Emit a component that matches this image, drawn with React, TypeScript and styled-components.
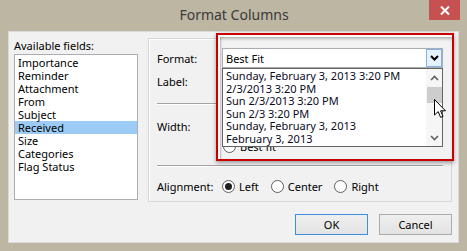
import * as React from "react";
import styled, { createGlobalStyle } from "styled-components";

const GlobalStyle = createGlobalStyle`
  html, body {
    margin: 0;
    padding: 0;
  }
  body {
    width: 467px;
    height: 251px;
    overflow: hidden;
    font-family: "Noto Sans", "Open Sans", sans-serif;
    font-size: 11px;
    color: #000;
  }
`;

const Window = styled.div`
  position: relative;
  width: 467px;
  height: 251px;
  box-sizing: border-box;
  padding: 0 8px 8px 8px;
  background: #bdb6a2;
  display: flex;
  flex-direction: column;
`;

const TitleBar = styled.div`
  height: 31px;
  display: grid;
  grid-template-columns: 1fr auto 1fr;
  margin-right: -1px;
`;

const Title = styled.div`
  grid-column: 2;
  font-size: 14px;
  line-height: 30px;
  color: #3a3a3a;
`;

const CloseButton = styled.div`
  grid-column: 3;
  justify-self: end;
  width: 31px;
  height: 20px;
  background: #c75050;
  display: flex;
  align-items: center;
  justify-content: center;
`;

const Client = styled.div`
  height: 212px;
  box-sizing: border-box;
  border: 1px solid #dadada;
  background: #f1f1f1;
  padding: 6px 6px 0 5px;
  display: flex;
  flex-direction: column;
`;

const TopRow = styled.div`
  display: flex;
  gap: 10px;
`;

const FieldsPanel = styled.div`
  width: 124px;
  display: flex;
  flex-direction: column;
`;

const PanelLabel = styled.div`
  height: 16px;
  line-height: 15px;
`;

const FieldList = styled.div`
  height: 146px;
  box-sizing: border-box;
  border: 1px solid #abadb3;
  background: #fff;
  padding-top: 1px;
`;

const FieldItem = styled.div<{ $selected?: boolean }>`
  height: 13px;
  line-height: 13px;
  padding-left: 3px;
  background: ${(p) => (p.$selected ? "#9ccbf5" : "transparent")};
`;

const GroupBox = styled.div`
  width: 304px;
  height: 164px;
  box-sizing: border-box;
  border: 1px solid #d6d6d6;
  box-shadow: inset 1px 1px 0 #fff;
  padding: 8px 8px 0 8px;
  display: flex;
  flex-direction: column;
`;

const FieldRow = styled.div<{ $gap?: number }>`
  height: 23px;
  margin-top: ${(p) => p.$gap ?? 0}px;
  display: flex;
  align-items: center;
`;

const FieldLabel = styled.div`
  width: 65px;
`;

const Divider = styled.div<{ $gap: number }>`
  margin-top: ${(p) => p.$gap}px;
  border-top: 1px solid #a3a3a3;
  border-bottom: 1px solid #fff;
`;

const RadioGroup = styled.div`
  display: flex;
  align-items: center;
  gap: 12px;
`;

const RadioOption = styled.label`
  display: flex;
  align-items: center;
  gap: 4px;
`;

const RadioCircle = styled.span<{ $checked?: boolean }>`
  flex: none;
  width: 13px;
  height: 13px;
  box-sizing: border-box;
  border-radius: 50%;
  border: 1px solid #5e5e5e;
  background: #fff;
  display: flex;
  align-items: center;
  justify-content: center;

  &::after {
    content: "";
    width: 7px;
    height: 7px;
    border-radius: 50%;
    background: ${(p) => (p.$checked ? "#1f1f1f" : "transparent")};
  }
`;

const ButtonRow = styled.div`
  margin-top: 12px;
  display: flex;
  justify-content: flex-end;
  gap: 11px;
`;

const Button = styled.div<{ $focused?: boolean }>`
  width: 73px;
  height: 21px;
  box-sizing: border-box;
  border: 1px solid ${(p) => (p.$focused ? "#3c8fe0" : "#acacac")};
  background: linear-gradient(#efefef, #e3e3e3);
  display: flex;
  align-items: center;
  justify-content: center;
`;

/* the red callout that shows the open dropdown */
const Callout = styled.div`
  position: absolute;
  left: 216px;
  top: 33px;
  width: 238px;
  height: 128px;
  box-sizing: border-box;
  border: 2px solid #c80000;
  background: #fafafa;
  box-shadow: 0 2px 4px rgba(0, 0, 0, 0.35);
  display: flex;
`;

const CalloutPanel = styled.div`
  flex: 1;
  margin: 2px 0 0 2px;
  padding: 11px 9px 0 2px;
  background: #f2f2f2;
  box-shadow: inset 0 3px 3px -1px rgba(0, 0, 0, 0.25),
    inset 2px 0 2px -1px rgba(0, 0, 0, 0.2);
  display: flex;
  flex-direction: column;
  overflow: hidden;
`;

const Combo = styled.div`
  height: 20px;
  box-sizing: border-box;
  border: 1px solid #abadb3;
  background: #fff;
  display: flex;
  align-items: center;
  padding-left: 3px;
`;

const ComboArrow = styled.div`
  margin-left: auto;
  width: 16px;
  height: 18px;
  box-sizing: border-box;
  border: 1px solid #7eb4ea;
  background: #e5f1fb;
  display: flex;
  align-items: center;
  justify-content: center;
`;

const DropList = styled.div`
  height: 79px;
  box-sizing: border-box;
  border: 1px solid #646464;
  background: #fff;
  display: flex;
`;

const DropItems = styled.div`
  flex: 1;
  padding: 1px 0 0 3px;
  overflow: hidden;
`;

const DropItem = styled.div`
  line-height: 12.6px;
  white-space: nowrap;
  color: #0a0a1e;
`;

const ScrollBar = styled.div`
  width: 16px;
  background: #f6f6f6;
  display: flex;
  flex-direction: column;
`;

const ScrollArrow = styled.div`
  height: 17px;
  display: flex;
  align-items: center;
  justify-content: center;
`;

const ScrollThumb = styled.div`
  height: 16px;
  margin: 1px 0 0 1px;
  background: #cdcdcd;
`;

const ScrollTrack = styled.div`
  flex: 1;
`;

/* only the bottom sliver of the "Best fit" radio shows under the list */
const BestFitPeek = styled.div`
  height: 6px;
  overflow: hidden;
`;

const BestFitRow = styled.div`
  margin-top: -7px;
  padding-left: 1px;
  height: 13px;
  display: flex;
  align-items: center;
  gap: 4px;
`;

const Cursor = styled.svg`
  position: absolute;
  left: 216px;
  top: 64px;
`;

const Chevron = ({
  dir,
  color = "#000",
  w = 1.6,
}: {
  dir: "up" | "down";
  color?: string;
  w?: number;
}) => (
  <svg width="9" height="6" viewBox="0 0 9 6">
    <polyline
      points={dir === "down" ? "1,1 4.5,4.5 8,1" : "1,5 4.5,1.5 8,5"}
      fill="none"
      stroke={color}
      strokeWidth={w}
    />
  </svg>
);

const fields = [
  "Importance",
  "Reminder",
  "Attachment",
  "From",
  "Subject",
  "Received",
  "Size",
  "Categories",
  "Flag Status",
];

const formats = [
  "Sunday, February 3, 2013 3:20 PM",
  "2/3/2013 3:20 PM",
  "Sun 2/3/2013 3:20 PM",
  "Sun 2/3 3:20 PM",
  "Sunday, February 3, 2013",
  "February 3, 2013",
];

export default function App() {
  return (
    <Window>
      <GlobalStyle />
      <TitleBar>
        <Title>Format Columns</Title>
        <CloseButton>
          <svg width="10" height="9" viewBox="0 0 10 9">
            <path d="M1,0.5 L9,8.5 M9,0.5 L1,8.5" stroke="#fff" strokeWidth="2" />
          </svg>
        </CloseButton>
      </TitleBar>
      <Client>
        <TopRow>
          <FieldsPanel>
            <PanelLabel>Available fields:</PanelLabel>
            <FieldList>
              {fields.map((f) => (
                <FieldItem key={f} $selected={f === "Received"}>
                  {f}
                </FieldItem>
              ))}
            </FieldList>
          </FieldsPanel>
          <GroupBox>
            <FieldRow>
              <FieldLabel>Format:</FieldLabel>
            </FieldRow>
            <FieldRow>
              <FieldLabel>Label:</FieldLabel>
            </FieldRow>
            <Divider $gap={10} />
            <FieldRow $gap={10}>
              <FieldLabel>Width:</FieldLabel>
            </FieldRow>
            <Divider $gap={27} />
            <FieldRow $gap={8}>
              <FieldLabel>Alignment:</FieldLabel>
              <RadioGroup>
                <RadioOption>
                  <RadioCircle $checked />
                  Left
                </RadioOption>
                <RadioOption>
                  <RadioCircle />
                  Center
                </RadioOption>
                <RadioOption>
                  <RadioCircle />
                  Right
                </RadioOption>
              </RadioGroup>
            </FieldRow>
          </GroupBox>
        </TopRow>
        <ButtonRow>
          <Button $focused>OK</Button>
          <Button>Cancel</Button>
        </ButtonRow>
      </Client>

      <Callout>
        <CalloutPanel>
          <Combo>
            Best Fit
            <ComboArrow>
              <Chevron dir="down" w={2} />
            </ComboArrow>
          </Combo>
          <DropList>
            <DropItems>
              {formats.map((f) => (
                <DropItem key={f}>{f}</DropItem>
              ))}
            </DropItems>
            <ScrollBar>
              <ScrollArrow>
                <Chevron dir="up" color="#606060" />
              </ScrollArrow>
              <ScrollThumb />
              <ScrollTrack />
              <ScrollArrow>
                <Chevron dir="down" color="#606060" />
              </ScrollArrow>
            </ScrollBar>
          </DropList>
          <BestFitPeek>
            <BestFitRow>
              <RadioCircle />
              Best fit
            </BestFitRow>
          </BestFitPeek>
        </CalloutPanel>
        <Cursor width="13" height="20" viewBox="0 0 13 20">
          <path
            d="M0.5,0.5 L0.5,16 L4.2,12.6 L6.6,18.4 L9,17.4 L6.6,11.8 L11.5,11.8 Z"
            fill="#fff"
            stroke="#000"
            strokeWidth="1"
            strokeLinejoin="round"
          />
        </Cursor>
      </Callout>
    </Window>
  );
}
